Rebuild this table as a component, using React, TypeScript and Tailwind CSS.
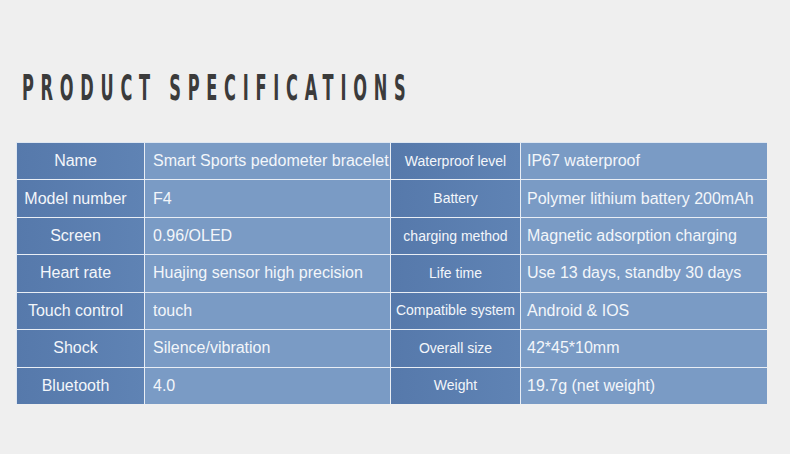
const specs = [
  ['Name', 'Smart Sports pedometer bracelet', 'Waterproof level', 'IP67 waterproof'],
  ['Model number', 'F4', 'Battery', 'Polymer lithium battery 200mAh'],
  ['Screen', '0.96/OLED', 'charging method', 'Magnetic adsorption charging'],
  ['Heart rate', 'Huajing sensor high precision', 'Life time', 'Use 13 days, standby 30 days'],
  ['Touch control', 'touch', 'Compatible system', 'Android & IOS'],
  ['Shock', 'Silence/vibration', 'Overall size', '42*45*10mm'],
  ['Bluetooth', '4.0', 'Weight', '19.7g (net weight)'],
];

const App = () => {
  return (
    <div className="w-[790px] h-[454px] bg-[#efefef] overflow-hidden font-['Liberation_Sans',Arial,sans-serif]">
      {/* Title */}
      <div className="pt-[68px] pl-[22px] h-[142px]">
        <h1 className="origin-left scale-x-[0.5] whitespace-nowrap text-[36px] leading-[40px] font-bold tracking-[13.5px] text-[#3b3b3b] font-['DejaVu_Sans_Condensed','DejaVu_Sans',sans-serif]">
          PRODUCT SPECIFICATIONS
        </h1>
      </div>

      {/* Spec table */}
      <div className="ml-[16px] w-[751px] h-[262px] grid grid-cols-[127px_245px_129px_246px] grid-rows-7 gap-px bg-[#e9eef5] border-t border-l border-[#dfe7f1] text-[#f3f6fa]">
        {specs.map((row, i) => (
          <div key={i} className="contents">
            <div className="flex items-center justify-center pr-[10px] bg-gradient-to-r from-[#5679ab] to-[#5f83b4] text-[16px] whitespace-nowrap">
              {row[0]}
            </div>
            <div className="flex items-center pl-[8px] bg-[#7a9bc5] text-[16px] whitespace-nowrap overflow-visible relative z-10">
              {row[1]}
            </div>
            <div className="flex items-center justify-center bg-gradient-to-r from-[#5679ab] to-[#5f83b4] text-[14px] whitespace-nowrap">
              {row[2]}
            </div>
            <div className="flex items-center pl-[6px] bg-[#7a9bc5] text-[16px] whitespace-nowrap">
              {row[3]}
            </div>
          </div>
        ))}
      </div>
    </div>
  );
};

export default App;
